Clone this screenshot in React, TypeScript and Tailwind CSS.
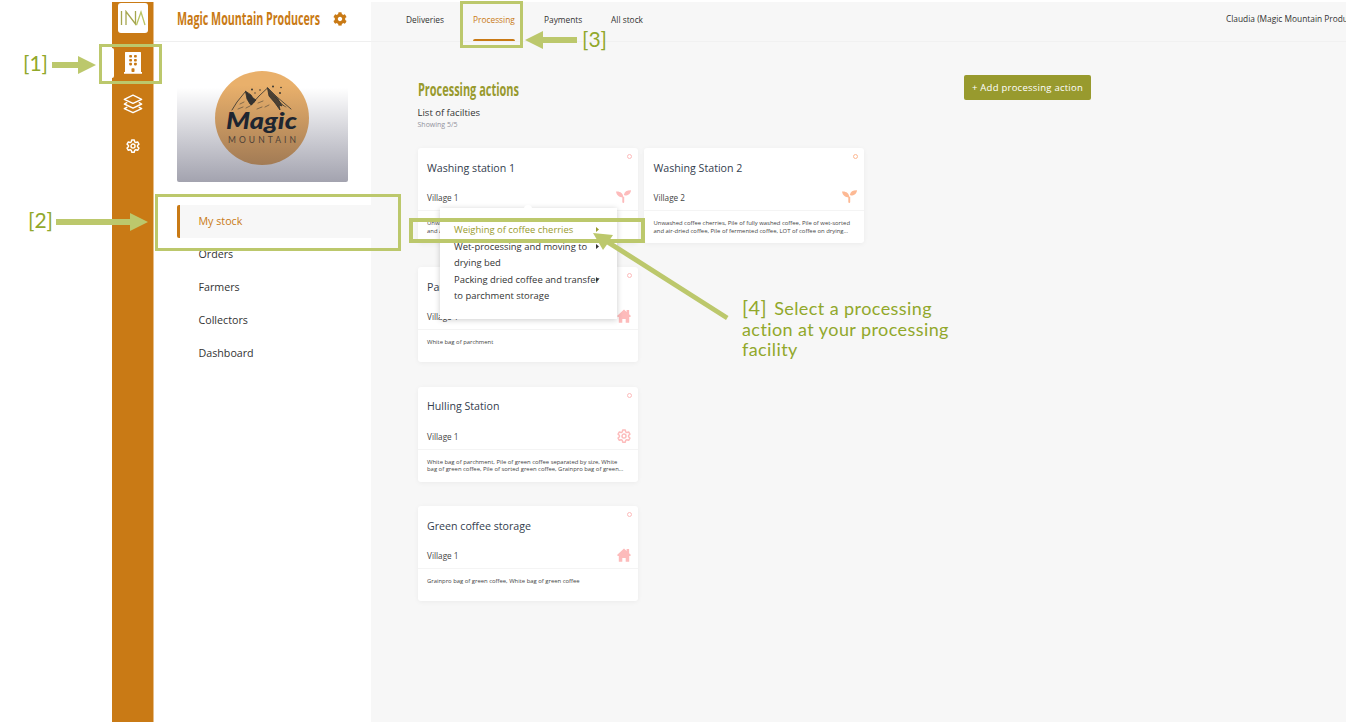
import React from "react";
import { FaCog } from "react-icons/fa";

const OPEN = "font-['Open_Sans','Noto_Sans',sans-serif]";
const NOTE = "font-['Lato',sans-serif] text-[#91a82b] whitespace-nowrap";

function Gear({ className }: { className: string }) {
  return (
    <svg viewBox="0 0 24 25" className={className} fill="none" stroke="currentColor" strokeWidth="2.6" strokeLinejoin="round">
      <path d="M9.7 1.8h4.6l.7 3.3 2.1 1.2 3.2-1 2.3 3.9-2.5 2.3v2.4l2.5 2.3-2.3 3.9-3.2-1-2.1 1.2-.7 3.3H9.700l-.7-3.300-2.100-1.200-3.200 1-2.300-3.900 2.500-2.300v-2.400L1.400 9.200l2.300-3.900 3.200 1L9 5.100z" />
      <circle cx="12" cy="12.700" r="3.600" />
    </svg>
  );
}

function House({ className }: { className: string }) {
  return (
    <svg viewBox="0 0 14 14" className={className} fill="currentColor">
      <path d="M7 .5 9.600 2.900V1h2.500v4.200L14 7l-.9 1.100H.9L0 7z" />
      <path d="M1.800 7.500h10.400V13.800H8.700V9.900H5.300v3.900H1.800z" />
    </svg>
  );
}

function Sprout({ className }: { className: string }) {
  return (
    <svg viewBox="0 0 15 13" className={className} fill="currentColor">
      <path d="M0 1.600C4.200 1.200 7 3.300 7.300 7.400 3.300 7.600.6 5.500 0 1.600z" />
      <path d="M7.900 4.800C8.400 1.600 11 .2 15 .3 14.700 3.700 12 5.700 8.800 5.600z" />
      <path d="M6.300 6.800h1.900v5.300q0 .9-.9.900t-1-.9z" />
    </svg>
  );
}

function Building() {
  return (
    <svg viewBox="0 0 18 22" className="h-[22px] w-[18px]">
      <path fill="#fff" d="M1 .6q0-.6.6-.6h14.800q.6 0 .6.600v19.500h1v1.700H0v-1.700h1z" />
      <g fill="#c97a15">
        {[3.0, 6.9, 10.8].map((y) => (
          <g key={y}>
            <rect x="5.200" y={y} width="2.800" height="2.600" rx=".8" />
            <rect x="10.000" y={y} width="2.800" height="2.600" rx=".8" />
          </g>
        ))}
        <rect x="7.500" y="16.200" width="3" height="3.900" rx=".8" />
      </g>
    </svg>
  );
}

function Layers() {
  return (
    <svg viewBox="0 0 20 20" className="h-5 w-5" fill="none" stroke="#fff" strokeWidth="1.400" strokeLinejoin="round" strokeLinecap="round">
      <path d="M10 1.200 18.700 5.300 10 9.400 1.300 5.300z" />
      <path d="M3.800 8.700 1.300 10 10 14.100 18.700 10l-2.500-1.300" />
      <path d="M3.800 13.300 1.300 14.600 10 18.700l8.700-4.100-2.500-1.300" />
    </svg>
  );
}

function Logo() {
  return (
    <svg viewBox="0 0 94 94" className="h-[94px] w-[94px]">
      <defs>
        <linearGradient id="disc" x1="0" y1="0" x2="0" y2="1">
          <stop offset=".15" stopColor="#e9b06b" />
          <stop offset="1" stopColor="#a27b55" />
        </linearGradient>
      </defs>
      <circle cx="47" cy="47" r="47" fill="url(#disc)" />
      <g stroke="#2f302f" fill="none" strokeWidth=".8" strokeLinecap="round" strokeLinejoin="round">
        <path d="M17 39 22 31 30.500 20.500 39 31M36 34 44 25 52.500 17 62 26 76 38" />
        <path fill="#343230" d="M30.500 20.500 32 28l3 5 1.500 1L41 29l-3-2-2-3z" />
        <path fill="#4b4032" d="M52.500 17 54 25l6 7 5 7-1-5 3 1-4-7z" />
        <path d="m25 33 4-2M23 38l5-2M31 37l4-2M43 32l5-2M42 38l5-2M50 36l4-2M60 26l9 9M66 33l5 3" strokeWidth=".5" />
      </g>
      <g fill="#3a3731">
        <circle cx="37" cy="18.500" r="1" /><circle cx="45" cy="19" r=".8" /><circle cx="40" cy="22" r=".7" />
        <circle cx="58" cy="15.500" r="1" /><circle cx="66" cy="16.500" r=".8" /><circle cx="65" cy="22" r="1" />
      </g>
      <text x="11" y="58" textLength="71" lengthAdjust="spacingAndGlyphs" fontFamily="Lato, sans-serif" fontStyle="italic" fontWeight="900" fontSize="23" fill="#1d2530">Magic</text>
      <text x="13" y="72" textLength="68" fontFamily="Lato, sans-serif" fontSize="8.500" fill="#4d4137">MOUNTAIN</text>
    </svg>
  );
}

type CardProps = {
  title: string;
  village: string;
  lines: string[];
  icon: "sprout" | "home" | "gear";
  tint?: string;
};

function Card({ title, village, lines, icon, tint = "text-[#fdbbbb]" }: CardProps) {
  return (
    <article className="flex h-[95px] w-[220px] flex-col rounded-[3px] bg-white shadow-[0_1px_5px_rgba(0,0,0,0.05)]">
      <div className={`flex h-[63px] shrink-0 flex-col border-b border-[#f4f4f4] pl-[9.500px] pr-[6px] ${tint}`}>
        <div className="flex h-[29px] justify-between">
          <h2 className="pt-[12.600px] text-[10.650px] leading-[15px] text-[#34404e]">{title}</h2>
          <span className="mt-[6px] h-[5px] w-[5px] rounded-full border border-current" />
        </div>
        <div className="flex items-center justify-between pr-[1px] pt-[12.500px]">
          <span className="pt-[1.600px] text-[8.200px] leading-[13px] text-[#444]">{village}</span>
          {icon === "sprout" && <Sprout className="h-[13px] w-[15px]" />}
          {icon === "home" && <House className="h-[14px] w-[14px]" />}
          {icon === "gear" && <Gear className="h-[14px] w-[14px]" />}
        </div>
      </div>
      <div className="whitespace-nowrap pl-[9.500px] pt-[9px] text-[5.900px] leading-[7.500px] text-[#444]">
        {lines.map((l) => <p key={l}>{l}</p>)}
      </div>
    </article>
  );
}

function Caret({ className }: { className: string }) {
  return <svg viewBox="0 0 3 5" className={`h-[5px] w-[3px] ${className}`}><path fill="currentColor" d="M0 0 3 2.500 0 5z" /></svg>;
}

function ActionMenu() {
  return (
    <div className="absolute left-[440px] top-[208px] h-[111px] w-[177px] bg-white pl-[14px] pt-[14.300px] text-[9.430px] leading-[16.500px] text-[#333] shadow-[0_1px_6px_rgba(0,0,0,0.2)]">
      <span className="absolute left-[84px] top-[-3px] h-[4px] w-[8px] rounded-t bg-white" />
      <ul className="whitespace-nowrap">
        <li className="relative text-[#989a2e]">Weighing of coffee cherries<Caret className="absolute left-[142px] top-[5px]" /></li>
        <li className="relative">Wet-processing and moving to<br />drying bed<Caret className="absolute left-[142px] top-[5px]" /></li>
        <li className="relative">Packing dried coffee and transfer<br />to parchment storage<Caret className="absolute left-[142px] top-[5px]" /></li>
      </ul>
    </div>
  );
}

const washing2 = ["Unwashed coffee cherries, Pile of fully washed coffee, Pile of wet-sorted", "and air-dried coffee, Pile of fermented coffee, LOT of coffee on drying..."];

export default function App() {
  return (
    <div className={`relative flex h-[722px] w-[1347px] overflow-hidden bg-white pl-[112px] pr-px pt-[2px] ${OPEN}`}>
      <nav className="flex w-[42px] shrink-0 flex-col items-center border-r border-[#e7bd87] bg-[#c97a15]">
        <div className="mt-px flex h-[30px] w-[30px] items-center justify-center rounded-[3px] bg-white">
          <svg viewBox="0 0 26 16" className="h-4 w-[26px]" fill="none" strokeWidth="1.300">
            <path stroke="#a5a64e" d="M1.500 1v14M6 15V1.500L15.500 14V1" />
            <path stroke="#b9c462" d="M16.500 15 21 2l4 13" />
          </svg>
        </div>
        <div className="mt-[14px] flex h-[31px] w-full items-center">
          <span className="h-[30px] w-[2px] rounded-r bg-white" />
          <span className="ml-[9.500px]"><Building /></span>
        </div>
        <span className="mt-[16px]"><Layers /></span>
        <Gear className="mt-[25px] h-[14px] w-[14px] text-white" />
      </nav>

      <aside className="flex w-[217px] shrink-0 flex-col bg-white">
        <header className="flex h-[40px] items-center border-b border-[#efefef] pb-[6px] pl-[23px]">
          <span className="block w-[156px]">
            <span className="inline-block origin-left scale-x-[0.594] whitespace-nowrap text-[18px] font-bold leading-5 text-[#c97a15]">Magic Mountain Producers</span>
          </span>
          <FaCog className="h-[14px] w-[14px] shrink-0 text-[#c97a15]" />
        </header>
        <div className="ml-[22.500px] mt-[29px] flex h-[111px] w-[171px] justify-center rounded-[2px] bg-linear-to-b from-white from-15% to-[#a3a3af]">
          <Logo />
        </div>
        <ul className="mt-[22.500px] pl-[23px] text-[10.700px] leading-[33px] text-[#333]">
          <li className="h-[33px] rounded-l-[2px] border-l-[3px] border-[#c97a15] bg-[#f7f7f7] pl-[18.500px] text-[#c97a15]">My stock</li>
          <li className="pl-[21.500px]">Orders</li>
          <li className="pl-[21.500px]">Farmers</li>
          <li className="pl-[21.500px]">Collectors</li>
          <li className="pl-[21.500px]">Dashboard</li>
        </ul>
      </aside>

      <main className="flex min-w-0 flex-1 flex-col bg-[#f7f7f7]">
        <header className="flex h-[40px] shrink-0 justify-between border-b border-[#f1f1f1] text-[8.350px] text-[#333]">
          <div className="flex pl-[35px] leading-[35px]">
            <span className="w-[67px]">Deliveries</span>
            <span className="flex h-[39px] w-[42px] flex-col justify-between whitespace-nowrap text-[#c97a15]">Processing<i className="block h-[2px] rounded-t bg-[#c97a15]" /></span>
            <span className="ml-[29px] w-[67px]">Payments</span>
            <span>All stock</span>
          </div>
          <span className="w-[120px] overflow-hidden whitespace-nowrap leading-[33px]">Claudia (Magic Mountain Producers)</span>
        </header>
        <div className="flex justify-between pl-[46.500px] pr-[255px] pt-[33px]">
          <section>
            <h1 className="w-[102px] text-[18px] font-bold leading-[28px] text-[#989a2e]"><span className="inline-block origin-left scale-x-[0.608] whitespace-nowrap">Processing actions</span></h1>
            <p className="mt-[3px] text-[9.500px] leading-[13px] text-[#333]">List of facilties</p>
            <p className="text-[7px] leading-[11px] text-[#92929d]">Showing 5/5</p>
          </section>
          <button className="h-[25px] w-[127px] whitespace-nowrap rounded-[2px] bg-[#989a2e] pt-px text-[9.500px] tracking-[0.25px] text-white">+ Add processing action</button>
        </div>
        <div className="grid grid-cols-[220px_220px] gap-x-[6.500px] gap-y-[24.400px] pl-[46.500px] pt-[18px]">
          <Card title="Washing station 1" village="Village 1" icon="sprout" lines={["Unwashed coffee cherries, Pile of fully washed coffee, Pile of dried", "and air-dried coffee, Pile of fermented coffee, LOT of coffee drying..."]} />
          <Card title="Washing Station 2" village="Village 2" icon="sprout" tint="text-[#fdb994]" lines={washing2} />
          <Card title="Parchment storage" village="Village 1" icon="home" lines={["White bag of parchment"]} />
          <span />
          <Card title="Hulling Station" village="Village 1" icon="gear" lines={["White bag of parchment, Pile of green coffee separated by size, White", "bag of green coffee, Pile of sorted green coffee, Grainpro bag of green..."]} />
          <span />
          <Card title="Green coffee storage" village="Village 1" icon="home" lines={["Grainpro bag of green coffee, White bag of green coffee"]} />
        </div>
      </main>

      <ActionMenu />

      <span className="absolute left-[99px] top-[44px] h-[40px] w-[63px] border-[3px] border-[#bcc86c]" />
      <span className="absolute left-[155px] top-[194px] h-[57px] w-[246px] border-[3px] border-[#bcc86c]" />
      <span className="absolute left-[460px] top-[1px] h-[47px] w-[63px] border-[3px] border-[#bcc86c]" />
      <span className="absolute left-[409px] top-[218px] h-[25px] w-[236px] border-4 border-[#bcc86c]" />
      <svg className="absolute left-0 top-0 h-[722px] w-[1347px]" viewBox="0 0 1347 722" fill="#bcc86c">
        <path d="M52 62h26v-6l18 9-18 9v-6H52z" />
        <path d="M56 219h74v-6l18 9-18 9v-6H56z" />
        <path d="M577 37h-34v-6l-18 9 18 9v-6h34z" />
        <path d="m593 233 20 2-3.500 5.200L728.500 316l-2.500 4-119-75.500-4 5.500z" />
      </svg>
      <span className={`absolute left-[23px] top-[50px] text-[21px] leading-[26px] ${NOTE}`}>[1]</span>
      <span className={`absolute left-[28px] top-[207px] text-[21px] leading-[26px] ${NOTE}`}>[2]</span>
      <span className={`absolute left-[582px] top-[26px] text-[21px] leading-[26px] ${NOTE}`}>[3]</span>
      <p className={`absolute left-[742px] top-[297px] text-[18px] leading-[20.500px] tracking-[0.420px] ${NOTE}`}>
        <span className="mr-[2px] text-[20px]">[4]</span> Select a processing<br />action at your processing<br />facility
      </p>
    </div>
  );
}
